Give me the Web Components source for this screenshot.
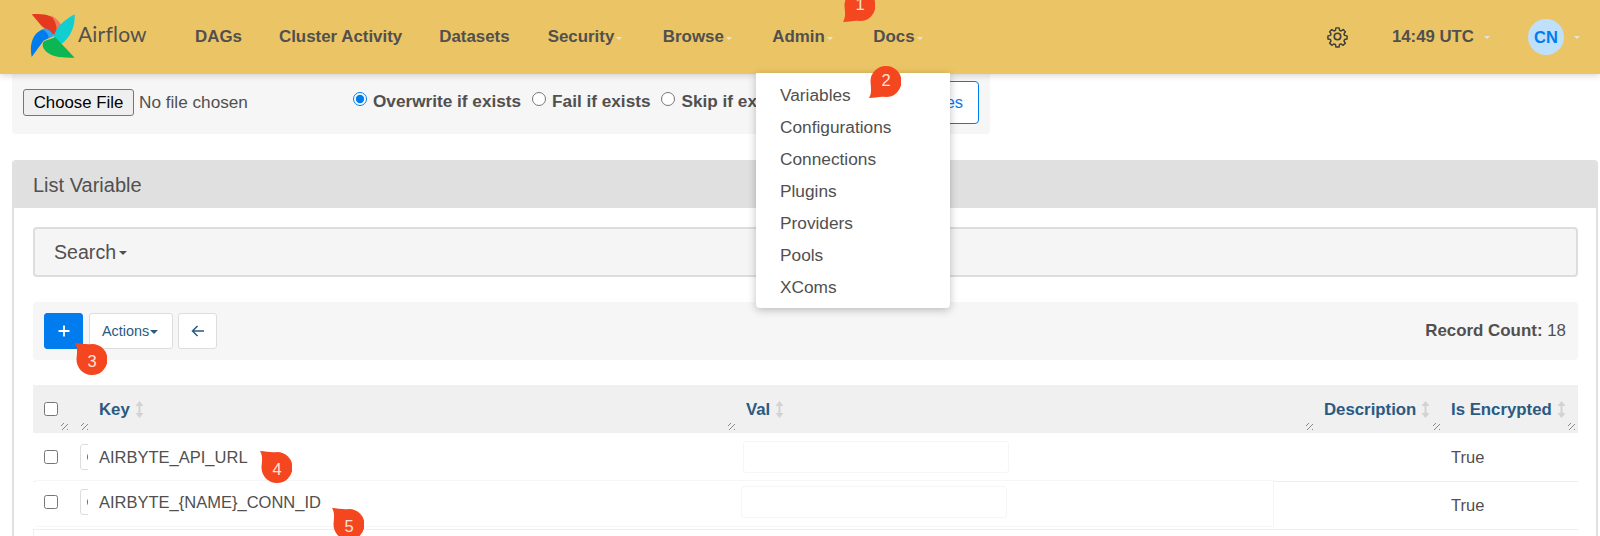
<!DOCTYPE html>
<html lang="en">
<head>
<meta charset="utf-8">
<title>List Variable - Airflow</title>
<style>
  html, body { margin: 0; height: 536px; overflow: hidden; background: #fff; }
  body { font-family: "Liberation Sans", Arial, sans-serif; color: #51504f; position: relative; }
</style>
</head>
<body>
<air-navbar>
  <nav-link>DAGs</nav-link>
  <nav-link>Cluster Activity</nav-link>
  <nav-link style="margin-right:38px">Datasets</nav-link>
  <nav-link caret>Security</nav-link>
  <nav-link caret>Browse</nav-link>
  <nav-link caret>Admin</nav-link>
  <nav-link caret>Docs</nav-link>
</air-navbar>
<import-well></import-well>
<list-panel heading="List Variable">
  <search-box></search-box>
  <list-toolbar></list-toolbar>
  <var-table></var-table>
</list-panel>
<admin-menu></admin-menu>
<step-badge n="1" x="843" y="-11"></step-badge>
<step-badge n="2" x="869" y="65"></step-badge>
<step-badge n="3" x="75" y="343" tip="top"></step-badge>
<step-badge n="4" x="260" y="451" tip="top"></step-badge>
<step-badge n="5" x="332" y="508" tip="top"></step-badge>

<script>
class AirNavbar extends HTMLElement {
  constructor() {
    super();
    this.attachShadow({ mode: "open" });
  }

  connectedCallback() {
    this.shadowRoot.innerHTML = `
      <style>
        :host {
          display: flex;
          align-items: center;
          height: 74px;
          background: #ebc565;
          box-shadow: 0 2px 6px rgba(0, 0, 0, 0.15);
          position: relative;
          z-index: 2;
          color: #51504f;
        }
        .logo { display: flex; align-items: center; margin-left: 30px; width: 165px; }
        .logo svg { width: 46px; height: 46px; margin-top: -3px; flex: none; }
        .logo span {
          font: 400 21px Lato, sans-serif;
          margin: -8px 0 0 2px;
          letter-spacing: 0.2px;
        }
        .links { display: flex; flex: 1; align-items: center; }
        .right { display: flex; align-items: center; font-weight: bold; font-size: 16.8px; }
        .gear { width: 23px; height: 23px; margin: -2px 43px 0 0; display: block; }
        .caret {
          width: 0; height: 0;
          border: 3.5px solid transparent;
          border-top: 3.5px solid #e6e3dc;
          border-bottom: 0;
          margin-left: 10px;
        }
        .avatar {
          width: 36px; height: 36px;
          border-radius: 50%;
          background: #bfe0fb;
          color: #017cee;
          display: flex;
          align-items: center;
          justify-content: center;
          margin-left: 38px;
          font-size: 16.5px;
        }
        .me { margin-right: 20px; }
      </style>
      <div class="logo">
        <svg viewBox="90 33 136 136">
          <path fill="#e43921" d="M95 37C125 33 165 38 180 70C186 85 178 96 165 100L125 72Z"/>
          <path fill="#f37a5a" d="M150 40C172 48 190 72 185 92C182 98 175 100 165 100C172 85 170 60 150 40Z"/>
          <path fill="#11cfd0" d="M222 37C224 70 212 105 180 127L160 105C165 75 190 55 222 37Z"/>
          <path fill="#0cb653" d="M222 165C190 166 150 165 133 142C125 130 126 118 135 115L165 105Z"/>
          <path fill="#017cee" d="M95 163C88 130 95 92 130 80C145 77 155 88 160 100L130 115Z"/>
          <path fill="#35a4f0" d="M125 81C140 75 155 88 160 100L145 107C145 95 135 85 125 81Z"/>
        </svg>
        <span>Airflow</span>
      </div>
      <div class="links"><slot></slot></div>
      <div class="right">
        <svg class="gear" viewBox="0 0 24 24" fill="none" stroke="#3f3e3d" stroke-width="1.7" stroke-linejoin="round">
          <circle cx="12" cy="12" r="3.4"/>
          <path d="M10.2 2h3.6l.6 2.9 1.7.7 2.5-1.6 2.5 2.5-1.6 2.5.7 1.7 2.9.6v3.6l-2.9.6-.7 1.7 1.6 2.5-2.5 2.5-2.5-1.6-1.7.7-.6 2.9h-3.6l-.6-2.9-1.7-.7-2.5 1.6-2.5-2.5 1.6-2.5-.7-1.7-2.9-.6v-3.6l2.9-.6.7-1.7-1.6-2.5 2.5-2.5 2.5 1.6 1.7-.7z" transform="translate(1.2 1.2) scale(.9)"/>
        </svg>
        <span>14:49 UTC</span><i class="caret"></i>
        <span class="avatar">CN</span><i class="caret me"></i>
      </div>
    `;
  }
}

class NavLink extends HTMLElement {
  constructor() {
    super();
    this.attachShadow({ mode: "open" });
  }

  connectedCallback() {
    const caret = this.hasAttribute("caret");
    this.shadowRoot.innerHTML = `
      <style>
        :host {
          display: flex;
          align-items: center;
          font-weight: bold;
          font-size: 16.9px;
          margin-right: ${caret ? 40.5 : 37}px;
        }
        i {
          width: 0; height: 0;
          border: 3.5px solid transparent;
          border-top: 3.5px solid #e6e3dc;
          border-bottom: 0;
          margin: 3px 0 0 2px;
        }
      </style>
      <slot></slot>${caret ? "<i></i>" : ""}
    `;
  }
}

class ImportWell extends HTMLElement {
  constructor() {
    super();
    this.attachShadow({ mode: "open" });
  }

  connectedCallback() {
    this.shadowRoot.innerHTML = `
      <style>
        :host {
          display: flex;
          align-items: flex-start;
          width: 978px;
          height: 60px;
          margin-left: 12px;
          background: #f6f6f6;
          border-radius: 0 0 4px 4px;
          box-sizing: border-box;
          padding: 7px 11px 0;
          font-size: 17.2px;
          color: #51504f;
        }
        .file { height: 27px; margin-top: 8px; display: flex; align-items: center; width: 330px; flex: none; }
        .pick {
          font: 16.8px "Liberation Sans", Arial, sans-serif;
          color: #000;
          width: 111px; height: 27px;
          padding: 0;
          background: #efefef;
          border: 1px solid #767676;
          border-radius: 3px;
          margin-right: 5px;
        }
        label { display: flex; align-items: center; height: 27px; margin-top: 7px; font-weight: bold; margin-right: 11px; flex: none; }
        input { width: 14px; height: 14px; margin: -5px 6px 0 0; accent-color: #017cee; }
        .import {
          position: absolute;
          left: 832px; top: 81px;
          width: 147px; height: 43px;
          box-sizing: border-box;
          border: 1px solid #017cee;
          border-radius: 4px;
          color: #017cee;
          background: #fff;
          display: flex;
          align-items: center;
          justify-content: flex-end;
          padding-right: 15px;
          font-size: 16.4px;
        }
      </style>
      <div class="file"><button class="pick">Choose File</button><span>No file chosen</span></div>
      <label><input type="radio" name="w" checked>Overwrite if exists</label>
      <label><input type="radio" name="w">Fail if exists</label>
      <label><input type="radio" name="w">Skip if exists</label>
      <div class="import">Import Variables</div>
    `;
  }
}

class ListPanel extends HTMLElement {
  constructor() {
    super();
    this.attachShadow({ mode: "open" });
  }

  connectedCallback() {
    this.shadowRoot.innerHTML = `
      <style>
        :host {
          display: block;
          margin: 26px 2px 0 12px;
          border: 2px solid #e0e0e0;
          border-bottom: 0;
          border-radius: 4px 4px 0 0;
          height: 380px;
          overflow: hidden;
          box-sizing: border-box;
        }
        h2 {
          margin: 0;
          height: 46px;
          background: #e0e0e0;
          font-size: 20px;
          font-weight: normal;
          line-height: 47px;
          padding-left: 19px;
          color: #51504f;
        }
        .body { padding: 19px 18px 0 19px; }
      </style>
      <h2>${this.getAttribute("heading") || ""}</h2>
      <div class="body"><slot></slot></div>
    `;
  }
}

class SearchBox extends HTMLElement {
  constructor() {
    super();
    this.attachShadow({ mode: "open" });
  }

  connectedCallback() {
    this.shadowRoot.innerHTML = `
      <style>
        :host {
          display: flex;
          align-items: center;
          height: 50px;
          box-sizing: border-box;
          border: 2px solid #ddd;
          border-radius: 4px;
          background: #f5f5f5;
          padding-left: 19px;
          font-size: 19.6px;
          color: #51504f;
        }
        i {
          width: 0; height: 0;
          border: 4px solid transparent;
          border-top: 4px solid #51504f;
          border-bottom: 0;
          margin: 2px 0 0 3px;
        }
      </style>
      Search<i></i>
    `;
  }
}

class ListToolbar extends HTMLElement {
  constructor() {
    super();
    this.attachShadow({ mode: "open" });
  }

  connectedCallback() {
    this.shadowRoot.innerHTML = `
      <style>
        :host {
          display: flex;
          align-items: center;
          gap: 6px;
          height: 58px;
          margin-top: 25px;
          padding: 0 11px;
          background: #f6f6f6;
          border-radius: 4px;
        }
        .btn {
          height: 36px;
          box-sizing: border-box;
          border: 1px solid #ddd;
          border-radius: 3px;
          background: #fff;
          color: #2a5a82;
          display: flex;
          align-items: center;
          justify-content: center;
          font-size: 14.4px;
        }
        .add { width: 39px; background: #017cee; border-color: #017cee; }
        .actions { width: 84px; padding-right: 2px; }
        .back { width: 39px; margin-left: -1px; }
        .actions i {
          width: 0; height: 0;
          border: 4px solid transparent;
          border-top: 4px solid #2a5a82;
          border-bottom: 0;
          margin: 2px 0 0 1px;
        }
        .count { margin-left: auto; font-size: 16.9px; color: #51504f; margin-right: 1px; }
        svg { width: 14px; height: 14px; display: block; }
      </style>
      <div class="btn add"><svg viewBox="0 0 14 14" stroke="#fff" stroke-width="1.8" fill="none"><path d="M7 1.5v11M1.5 7h11"/></svg></div>
      <div class="btn actions">Actions<i></i></div>
      <div class="btn back"><svg viewBox="0 0 14 14" stroke="#2a5a82" stroke-width="1.5" fill="none"><path d="M13 7H1.5M6.5 2 1.5 7l5 5"/></svg></div>
      <div class="count"><b>Record Count:</b> 18</div>
    `;
  }
}

class VarTable extends HTMLElement {
  constructor() {
    super();
    this.attachShadow({ mode: "open" });
  }

  sortIcon() {
    return `<svg class="sort" viewBox="0 0 9 17" fill="#d2d2d2"><path d="M4.5 0 8.5 5H5.5v7h3l-4 5-4-5h3V5h-3z"/></svg>`;
  }

  headCell(label) {
    return `<div class="cell th">${label ? `<b>${label}</b>${this.sortIcon()}` : ""}<span class="grip"></span></div>`;
  }

  bodyCells(key) {
    return `
      <div class="cell box"><input type="checkbox"></div>
      <div class="cell clip"><span class="act"><i></i></span></div>
      <div class="cell">${key}</div>
      <div class="cell"><span class="val"></span></div>`;
  }

  connectedCallback() {
    this.shadowRoot.innerHTML = `
      <style>
        :host {
          display: block;
          margin-top: 25px;
          font-size: 16.5px;
          color: #51504f;
          --cols: 35px 20px 647px 578px 127px 139px;
        }
        .row { display: grid; grid-template-columns: var(--cols); }
        .head { height: 48px; background: #f0f0f0; }
        .head .cell:last-child .grip { right: 4px; }
        .first { height: 49px; border-bottom: 1px solid #eee; box-sizing: border-box; }
        .second { height: 48px; border-bottom: 1px solid #eee; box-sizing: border-box; grid-template-columns: 1fr 139px; position: relative; }
        .second > .cell { padding-left: 12px; }
        .lifted {
          display: grid;
          grid-template-columns: 32px 20px 647px 537px;
          height: 47px;
          margin: -2px 0 0 3px;
          padding-bottom: 3px;
          background: #fff;
          border: solid #f6f6f6;
          border-width: 1px 1px 1px 0;
          box-sizing: border-box;
          position: relative;
          width: 1238px;
        }
        .lifted .box { padding-left: 8px; }
        .lifted .val { margin-left: -5px; }
        .rest { border-left: 1px solid #eee; height: 20px; }
        .cell { position: relative; display: flex; align-items: center; padding-left: 11px; min-width: 0; }
        .th b { font-size: 16.8px; color: #2a5a82; white-space: nowrap; }
        .th { padding-top: 1px; box-sizing: border-box; }
        .sort { width: 9px; height: 17px; margin-left: 5px; flex: none; }
        .grip {
          position: absolute;
          right: 0; bottom: 3px;
          width: 7px; height: 7px;
          background: repeating-linear-gradient(135deg, transparent 0 1.5px, #888 1.5px 2.2px, transparent 2.2px 3.5px);
        }
        input[type=checkbox] { width: 14px; height: 14px; margin: 0; }
        .clip { overflow: hidden; padding-left: 12px; }
        .act {
          flex: none;
          height: 26px;
          width: 40px;
          box-sizing: border-box;
          border: 1px solid #ddd;
          border-radius: 3px;
          padding: 7px 0 0 6px;
        }
        .act i {
          display: block;
          width: 8px; height: 10px;
          border: 1.2px solid #666;
          border-radius: 50%;
          box-sizing: border-box;
        }
        .val {
          display: block;
          width: 266px; height: 32px;
          margin-left: -3px;
          border: 1px solid #f6f6f6;
          border-radius: 3px;
          box-sizing: border-box;
        }
      </style>
      <div class="row head">
        <div class="cell th"><input type="checkbox" style="margin-top:-2px"><span class="grip"></span></div>
        ${this.headCell("")}
        ${this.headCell("Key")}
        ${this.headCell("Val")}
        ${this.headCell("Description")}
        ${this.headCell("Is Encrypted")}
      </div>
      <div class="row first">
        ${this.bodyCells("AIRBYTE_API_URL")}
        <div class="cell"></div>
        <div class="cell">True</div>
      </div>
      <div class="row second">
        <div class="lifted">${this.bodyCells("AIRBYTE_{NAME}_CONN_ID")}</div>
        <div class="cell">True</div>
      </div>
      <div class="rest"></div>
    `;
  }
}

class AdminMenu extends HTMLElement {
  constructor() {
    super();
    this.attachShadow({ mode: "open" });
  }

  connectedCallback() {
    const items = ["Variables", "Configurations", "Connections", "Plugins", "Providers", "Pools", "XComs"];
    this.shadowRoot.innerHTML = `
      <style>
        :host {
          position: absolute;
          left: 756px; top: 73px;
          width: 194px;
          background: #fff;
          border-radius: 0 0 4px 4px;
          box-shadow: 0 2px 8px rgba(0, 0, 0, 0.25);
          padding: 6px 0 5px;
          z-index: 3;
          font-size: 17.3px;
          color: #51504f;
        }
        div { height: 32px; line-height: 32px; padding-left: 24px; }
        div:first-child { background: #f5f5f5; color: #333; }
      </style>
      ${items.map((item) => `<div>${item}</div>`).join("")}
    `;
  }
}

class StepBadge extends HTMLElement {
  constructor() {
    super();
    this.attachShadow({ mode: "open" });
  }

  connectedCallback() {
    const top = this.getAttribute("tip") === "top";
    this.shadowRoot.innerHTML = `
      <style>
        :host {
          position: absolute;
          left: ${this.getAttribute("x")}px;
          top: ${this.getAttribute("y")}px;
          width: 32px; height: 33px;
          color: #fde3d6;
          display: flex;
          align-items: center;
          justify-content: center;
          font-size: 16.5px;
          z-index: 4;
        }
        svg { position: absolute; inset: 0; width: 100%; height: 100%; ${top ? "transform: scaleY(-1);" : ""} }
        span { position: relative; padding: ${top ? "3px 0 0 2px" : "0 0 3px 2px"}; }
      </style>
      <svg viewBox="0 0 32 33"><path fill="#f4471f" d="M0 33C3 28 2 23 1.500 17A15.500 15.500 0 1 1 17 32C11 31 6 33 0 33Z"/></svg>
      <span>${this.getAttribute("n")}</span>
    `;
  }
}

customElements.define("nav-link", NavLink);
customElements.define("air-navbar", AirNavbar);
customElements.define("import-well", ImportWell);
customElements.define("list-panel", ListPanel);
customElements.define("search-box", SearchBox);
customElements.define("list-toolbar", ListToolbar);
customElements.define("var-table", VarTable);
customElements.define("admin-menu", AdminMenu);
customElements.define("step-badge", StepBadge);
</script>
</body>
</html>
